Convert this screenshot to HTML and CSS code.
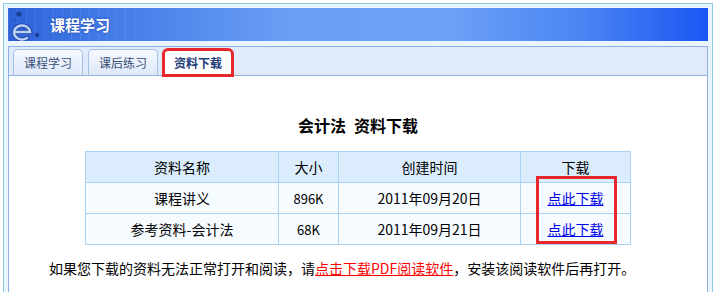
FILE: index.html
```html
<!DOCTYPE html>
<html>
<head>
    <title>课程学习</title>
    <link rel="stylesheet" href="styles.css">
</head>
<body>
    <div class="frame">
        <div class="banner">
            <svg class="logo" width="34" height="33" viewBox="0 0 34 33">
                <circle cx="11" cy="6" r="2.6" fill="#1c3f9c"/>
                <circle cx="7" cy="11" r="1.5" fill="#2a55c0"/>
                <path d="M7 24 H22 A8 7 0 1 0 19 30" fill="none" stroke="#24479f" stroke-width="4.5" stroke-linecap="round"/>
                <path d="M7 24 H22 A8 7 0 1 0 19 30" fill="none" stroke="#b6d0f7" stroke-width="2.5" stroke-linecap="round"/>
                <circle cx="29" cy="27" r="2.2" fill="#1c3f9c"/>
            </svg>
            <span class="banner-title">课程学习</span>
        </div>

        <div class="tabs">
            <a class="tab">课程学习</a>
            <a class="tab">课后练习</a>
            <a class="tab active">资料下载</a>
        </div>

        <div class="content">
            <h2 class="title">会计法&ensp;资料下载</h2>

            <div class="table-wrap">
                <table class="files">
                    <tr class="head">
                        <td class="c-name">资料名称</td>
                        <td class="c-size">大小</td>
                        <td class="c-date">创建时间</td>
                        <td class="c-dl">下载</td>
                    </tr>
                    <tr>
                        <td>课程讲义</td>
                        <td class="num">896K</td>
                        <td>2011年09月20日</td>
                        <td><a href="#">点此下载</a></td>
                    </tr>
                    <tr>
                        <td>参考资料-会计法</td>
                        <td class="num">68K</td>
                        <td>2011年09月21日</td>
                        <td><a href="#">点此下载</a></td>
                    </tr>
                </table>
                <div class="mark"></div>
            </div>

            <p class="note">如果您下载的资料无法正常打开和阅读，请<a href="#">点击下载PDF阅读软件</a>，安装该阅读软件后再打开。</p>
        </div>
    </div>
</body>
</html>
```

FILE: styles.css
```css
body {
    margin: 0;
    background: white;
    font-family: "Noto Sans CJK SC", "DejaVu Sans", sans-serif;
    color: #000;
}

.frame {
    margin: 3px 0 0 3px;
    width: 700px;
    padding: 4px;
    border: 1px solid #8ccbe2;
    border-bottom: none;
    background: #eaf4fc;
}

.banner {
    height: 33px;
    display: flex;
    align-items: center;
    background:
        repeating-linear-gradient(90deg, rgba(255,255,255,0.08) 0 1px, transparent 1px 9px) 0 0 / 130px 100% no-repeat,
        linear-gradient(90deg, #2d61d8 0%, #3f78e6 12%, #6a9ef5 40%, #6ea2f6 62%, #4a85f3 82%, #1b56f3 100%);
}

.logo {
    flex: none;
    margin-right: 8px;
}

.banner-title {
    color: white;
    font-size: 15px;
    font-weight: bold;
    text-shadow: 0 0 2px #1a3e9a;
}

.tabs {
    margin-top: 5px;
    height: 28px;
    display: flex;
    align-items: flex-end;
    gap: 5px;
    padding-left: 4px;
    background: #dfeafb;
    border: 1px solid #8eb0e0;
}

.tab {
    box-sizing: border-box;
    width: 70px;
    height: 27px;
    margin-bottom: -1px;
    display: flex;
    align-items: center;
    justify-content: center;
    font-size: 12px;
    color: #3a4f75;
    background: linear-gradient(#f6f9fe, #dde8fa);
    border: 1px solid #a6c0e6;
    border-bottom-color: #8eb0e0;
    border-radius: 5px 5px 0 0;
    cursor: pointer;
}

.tab.active {
    background: white;
    border-bottom-color: white;
    font-weight: bold;
    color: #1e3c78;
    outline: 3px solid #e8282c;
    outline-offset: -2px;
}

.content {
    background: white;
    border: 1px solid #8eb0e0;
    border-top: none;
    border-bottom: none;
    padding: 39px 0 30px;
}

.title {
    margin: 0 0 16px;
    text-align: center;
    font-size: 16px;
    line-height: 20px;
    font-weight: bold;
}

.table-wrap {
    position: relative;
    width: 546px;
    margin: 0 auto;
}

.files {
    width: 100%;
    border-collapse: collapse;
    font-size: 14px;
}

.files td {
    height: 30px;
    padding: 0;
    text-align: center;
    border: 1px solid #aad4f5;
    background: #f6fbff;
}

.files .head td {
    background: #dbedfc;
}

.c-name { width: 192px; }
.c-size { width: 59px; }
.c-date { width: 181px; }

.files .num {
    font-size: 13px;
}

.files a {
    color: #0000ee;
}

.mark {
    position: absolute;
    left: 451px;
    top: 25px;
    width: 81px;
    height: 68px;
    box-sizing: border-box;
    border: 3px solid #e8282c;
}

.note {
    margin: 13px 0 0;
    padding-left: 40px;
    font-size: 14px;
    line-height: 20px;
}

.note a {
    color: #ff0000;
}
```
